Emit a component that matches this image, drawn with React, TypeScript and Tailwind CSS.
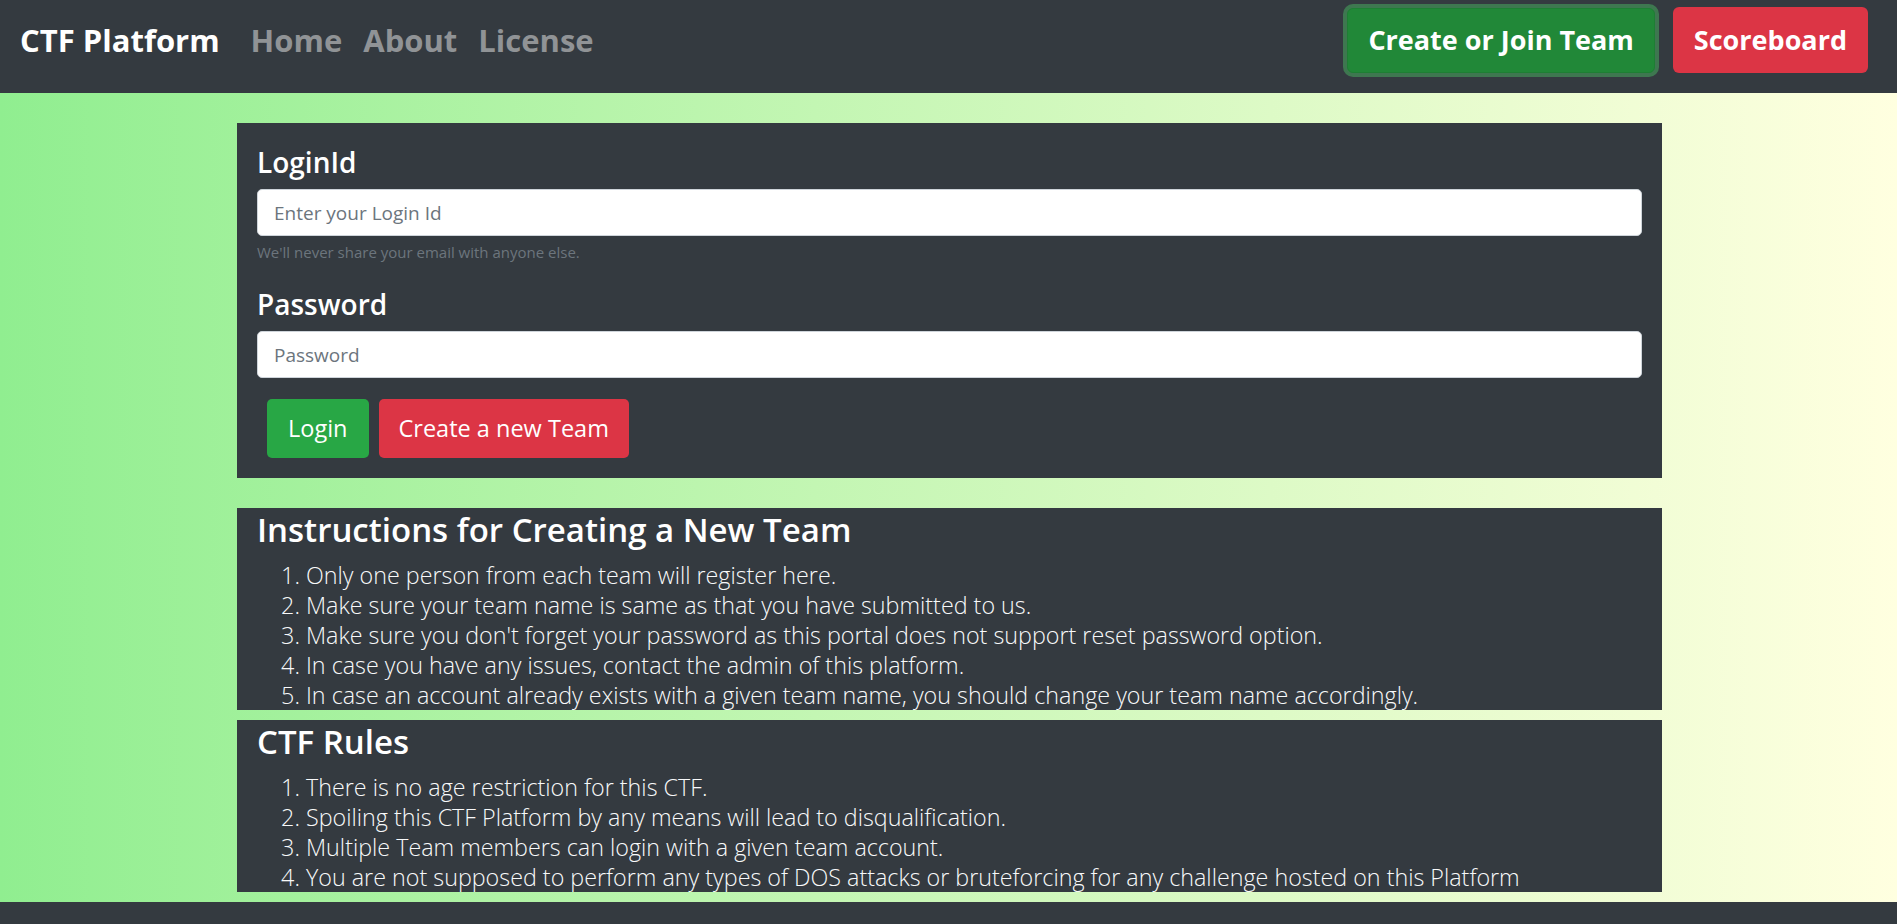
export default function App() {
  const instructions = [
    "Only one person from each team will register here.",
    "Make sure your team name is same as that you have submitted to us.",
    "Make sure you don't forget your password as this portal does not support reset password option.",
    "In case you have any issues, contact the admin of this platform.",
    "In case an account already exists with a given team name, you should change your team name accordingly.",
  ];
  const rules = [
    "There is no age restriction for this CTF.",
    "Spoiling this CTF Platform by any means will lead to disqualification.",
    "Multiple Team members can login with a given team account.",
    "You are not supposed to perform any types of DOS attacks or bruteforcing for any challenge hosted on this Platform",
  ];

  return (
    <div className="min-h-screen flex flex-col font-['Open_Sans','Noto_Sans',sans-serif]">
      {/* Navbar */}
      <nav className="h-[93px] bg-[#343a40] flex items-center justify-between pl-[20px] pr-[29px] pb-[13px]">
        <div className="flex items-center">
          <span className="text-[31px] font-bold text-white">CTF Platform</span>
          <div className="flex items-center gap-[21px] ml-[31px] text-[31px] font-bold text-[#909396]">
            <a href="#">Home</a>
            <a href="#">About</a>
            <a href="#">License</a>
          </div>
        </div>
        <div className="flex items-center gap-[18px]">
          <button className="h-[65px] px-[20px] rounded-[6px] bg-[#218838] border border-[#1e7e34] ring-4 ring-[#3e7750] text-white text-[27px] font-bold">
            Create or Join Team
          </button>
          <button className="h-[66px] px-[21px] rounded-[6px] bg-[#dc3545] text-white text-[27px] font-bold">
            Scoreboard
          </button>
        </div>
      </nav>

      {/* Main */}
      <main className="flex-1 bg-gradient-to-r from-[#90ee90] to-[#ffffe0] pt-[30px] pb-[10px]">
        <div className="w-[1425px] ml-[237px] flex flex-col">
          {/* Login card */}
          <form className="bg-[#343a40] px-5 pt-[22px] pb-5">
            <label className="block text-[28px] leading-[34px] font-semibold text-white">LoginId</label>
            <input
              type="text"
              placeholder="Enter your Login Id"
              className="mt-[10px] block w-full h-[47px] px-[16px] rounded-[5px] border border-[#ced4da] bg-white text-[19px] placeholder:text-[#6c757d] outline-none"
            />
            <p className="mt-[4px] text-[15px] leading-[24px] text-[#6c757d]">We'll never share your email with anyone else.</p>
            <label className="block mt-[23px] text-[28px] leading-[34px] font-semibold text-white">Password</label>
            <input
              type="password"
              placeholder="Password"
              className="mt-[10px] block w-full h-[47px] px-[16px] rounded-[5px] border border-[#ced4da] bg-white text-[19px] placeholder:text-[#6c757d] outline-none"
            />
            <div className="flex gap-[10px] mt-[21px] ml-[10px]">
              <button type="button" className="h-[59px] px-[21px] rounded-[5px] bg-[#28a745] text-white text-[23.5px]">
                Login
              </button>
              <button type="button" className="h-[59px] px-[20px] rounded-[5px] bg-[#dc3545] text-white text-[23.5px]">
                Create a new Team
              </button>
            </div>
          </form>

          {/* Instructions */}
          <section className="mt-[30px] bg-[#343a40] px-5 pt-[2px]">
            <h2 className="text-[33px] leading-[40px] font-semibold text-white mb-[10px]">
              Instructions for Creating a New Team
            </h2>
            <ol className="list-decimal pl-[49px] text-[23.3px] leading-[30px] font-light text-[#f8f9fa]">
              {instructions.map((item) => (
                <li key={item}>{item}</li>
              ))}
            </ol>
          </section>

          {/* Rules */}
          <section className="mt-[10px] bg-[#343a40] px-5 pt-[2px]">
            <h2 className="text-[33px] leading-[40px] font-semibold text-white mb-[10px]">CTF Rules</h2>
            <ol className="list-decimal pl-[49px] text-[23.3px] leading-[30px] font-light text-[#f8f9fa]">
              {rules.map((item) => (
                <li key={item}>{item}</li>
              ))}
            </ol>
          </section>
        </div>
      </main>

      <footer className="h-[22px] bg-[#343a40]" />
    </div>
  );
}
